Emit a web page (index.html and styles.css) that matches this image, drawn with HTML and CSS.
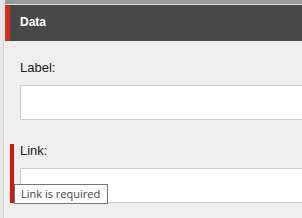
FILE: index.html
```html
<!DOCTYPE html>
<html>
<head>
<meta charset="utf-8">
<link rel="stylesheet" href="styles.css">
</head>
<body>
<div class="gutter"></div>
<div class="main">
  <div class="topbar"></div>
  <div class="header"><span class="title">Data</span></div>
  <div class="content">
    <div class="field">
      <div class="label">Label:</div>
      <input class="input" type="text">
    </div>
    <div class="field invalid">
      <div class="label">Link:</div>
      <input class="input" type="text">
      <div class="tooltip">Link is required</div>
    </div>
  </div>
</div>
</body>
</html>
```
FILE: styles.css
```css
html, body {
  margin: 0;
  padding: 0;
  height: 100%;
}
body {
  display: flex;
  background: #efefef;
  font-family: "Liberation Sans", Arial, sans-serif;
  overflow: hidden;
}
.gutter {
  width: 3px;
  flex: none;
  background: #e6e6e6;
  border-right: 1px solid #d6d6d6;
}
.main {
  flex: 1;
  min-width: 0;
  overflow: hidden;
  margin-left: 1px;
}
.topbar {
  height: 4px;
  background: #9a9a9a;
  border-bottom: 1px solid #dcdcdc;
}
.header {
  height: 36px;
  box-sizing: border-box;
  background: #484848;
  border-left: 5px solid #d42a1f;
  padding: 10px 0 0 10px;
}
.title {
  display: block;
  color: #ffffff;
  font-weight: bold;
  font-size: 12px;
  line-height: 14px;
}
.content {
  padding: 20px 0 0 5px;
  display: flex;
  flex-direction: column;
  gap: 24px;
}
.field {
  position: relative;
  border-left: 4px solid transparent;
  padding-left: 6px;
  display: flex;
  flex-direction: column;
  gap: 10px;
}
.field.invalid {
  border-left-color: #cc1a0e;
}
.label {
  font-size: 13px;
  line-height: 14px;
  color: #222;
}
.input {
  display: block;
  width: 330px;
  height: 35px;
  box-sizing: border-box;
  margin: 0;
  border: 1px solid #cccccc;
  background: #ffffff;
  padding: 0 6px;
  outline: none;
}
.tooltip {
  position: absolute;
  left: 0;
  top: 40px;
  height: 20px;
  box-sizing: border-box;
  border: 1px solid #767676;
  background: #ffffff;
  color: #444;
  font-family: "Open Sans", sans-serif;
  font-size: 11px;
  line-height: 18px;
  padding: 0 7px 0 6px;
  white-space: nowrap;
}
```
